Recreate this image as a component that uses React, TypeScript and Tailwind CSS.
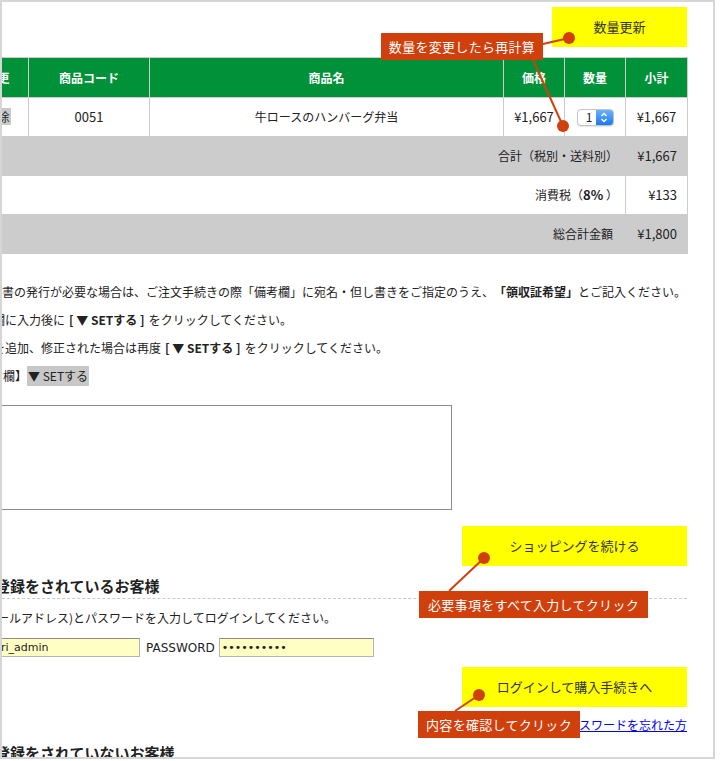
import React from "react";

const Callout: React.FC<{ className: string; children: React.ReactNode }> = ({
  className,
  children,
}) => (
  <div
    className={`absolute flex items-center justify-center bg-[#d0400c] text-[13px] tracking-[0.3px] text-white ${className}`}
  >
    {children}
  </div>
);

const YellowButton: React.FC<{ className: string; children: React.ReactNode }> = ({
  className,
  children,
}) => (
  <div className="flex justify-end">
    <div
      className={`flex h-[40px] items-center justify-center bg-[#ffff00] text-[13px] text-[#333] ${className}`}
    >
      {children}
    </div>
  </div>
);

const QtySelect = () => (
  <div className="mx-auto flex h-[17px] w-[37px] items-center overflow-hidden rounded-[4px] border border-[#c4c4c4] bg-white shadow-[0_1px_1px_rgba(0,0,0,0.1)]">
    <span className="flex-1 pl-[5px] text-[12px] leading-none">1</span>
    <span className="flex h-full w-[17px] items-center justify-center bg-linear-to-b from-[#69b1fb] to-[#1b78f0]">
      <svg width="8" height="11" viewBox="0 0 8 11" fill="none">
        <path d="M1.5 4 L4 1.5 L6.5 4" stroke="white" strokeWidth="1.4" />
        <path d="M1.5 7 L4 9.5 L6.5 7" stroke="white" strokeWidth="1.4" />
      </svg>
    </span>
  </div>
);

const SET = "[\u00a0▼ SETする ]";

export default function App() {
  return (
    <div className="h-[761px] w-[720px] bg-white font-['Noto_Sans_CJK_JP',sans-serif] text-[#222]">
      <div className="relative h-[759px] w-[715px] overflow-hidden border-2 border-[#d6d6d6] bg-white">
        <div className="pr-[26px] pt-[5px]">
          <YellowButton className="w-[135px]">数量更新</YellowButton>

          <table className="-ml-[36px] mt-[10px] w-[721px] table-fixed border-collapse text-[12px]">
            <colgroup>
              <col className="w-[62px]" />
              <col className="w-[121px]" />
              <col className="w-[354px]" />
              <col className="w-[61px]" />
              <col className="w-[61px]" />
              <col className="w-[62px]" />
            </colgroup>
            <thead>
              <tr className="h-[40px] bg-[#009139] font-bold text-white">
                <th className="border border-[#ccc]">変更</th>
                <th className="border border-[#ccc]">商品コード</th>
                <th className="border border-[#ccc]">商品名</th>
                <th className="border border-[#ccc]">価格</th>
                <th className="border border-[#ccc]">数量</th>
                <th className="border border-[#ccc]">小計</th>
              </tr>
            </thead>
            <tbody>
              <tr className="h-[39px] text-center text-[13px]">
                <td className="border border-[#ccc]">
                  <span className="bg-[#c8c8c8] px-[1px] text-[12px]">削除</span>
                </td>
                <td className="border border-[#ccc]">0051</td>
                <td className="border border-[#ccc] text-[12px]">牛ロースのハンバーグ弁当</td>
                <td className="border border-[#ccc]">¥1,667</td>
                <td className="border border-[#ccc]">
                  <QtySelect />
                </td>
                <td className="border border-[#ccc]">¥1,667</td>
              </tr>
              <tr className="h-[39px] bg-[#cccccc]">
                <td colSpan={5} className="border border-[#ccc] pr-[7px] text-right">
                  合計（税別・送料別）
                </td>
                <td className="border border-[#ccc] pr-[10px] text-right text-[13px]">¥1,667</td>
              </tr>
              <tr className="h-[39px]">
                <td colSpan={5} className="border border-[#ccc] pr-[7px] text-right">
                  消費税（<b className="text-[13px]">8%</b> ）
                </td>
                <td className="border border-[#ccc] pr-[10px] text-right text-[13px]">¥133</td>
              </tr>
              <tr className="h-[39px] bg-[#cccccc]">
                <td colSpan={5} className="border border-[#ccc] pr-[12px] text-right">
                  総合計金額
                </td>
                <td className="border border-[#ccc] pr-[10px] text-right text-[13px]">¥1,800</td>
              </tr>
            </tbody>
          </table>

          <div className="mt-[24px] whitespace-nowrap text-[12px]">
            <div className="-ml-[36px] flex h-[28px] items-center">
              ※領収書の発行が必要な場合は、ご注文手続きの際「備考欄」に宛名・但し書きをご指定のうえ、
              <b>「領収証希望」</b>とご記入ください。
            </div>
            <div className="-ml-[45px] flex h-[28px] items-center">
              ※備考欄に入力後に<b className="mx-[4px]">{SET}</b>をクリックしてください。
            </div>
            <div className="-ml-[45px] flex h-[28px] items-center">
              ※内容を追加、修正された場合は再度<b className="mx-[4px]">{SET}</b>
              をクリックしてください。
            </div>
            <div className="-ml-[35px] flex h-[28px] items-center">
              【備考欄】
              <span className="flex h-[20px] items-center bg-[#c8c8c8] px-[1px]">▼ SETする</span>
            </div>
          </div>

          <textarea
            readOnly
            className="-ml-[22px] mt-[15px] block h-[105px] w-[472px] resize-none border border-[#8c8c8c] outline-none"
          />

          <div className="mt-[16px]">
            <YellowButton className="w-[225px]">ショッピングを続ける</YellowButton>
          </div>

          <h3 className="-ml-[37px] whitespace-nowrap pt-[10px] text-[15px] font-bold leading-[20px]">
            会員登録をされているお客様
          </h3>
          <div className="mt-[2px] border-b border-dashed border-[#c8c8c8]" />

          <div className="-ml-[17px] mt-[9px] whitespace-nowrap text-[12px] leading-[20px]">
            メールアドレス)とパスワードを入力してログインしてください。
          </div>

          <div className="mt-[10px] flex h-[19px] items-center font-['DejaVu_Sans',sans-serif]">
            <input
              readOnly
              value="ri_admin"
              className="-ml-[4px] h-[19px] w-[142px] border border-[#b4b4b4] border-t-[#8c8c8c] bg-[#ffffc4] px-[2px] text-[11px] outline-none"
            />
            <span className="ml-[6px] text-[12px]">PASSWORD</span>
            <input
              readOnly
              type="password"
              value="abcdefghij"
              className="ml-[4px] h-[19px] w-[155px] border border-[#b4b4b4] border-t-[#8c8c8c] bg-[#ffffc4] px-[2px] text-[11px] outline-none"
            />
          </div>

          <div className="mt-[10px]">
            <YellowButton className="w-[225px]">ログインして購入手続きへ</YellowButton>
          </div>

          <div className="mt-[9px] text-right text-[12px] leading-[18px]">
            <a className="text-[#0000ee] underline">パスワードを忘れた方</a>
          </div>

          <h3 className="-ml-[37px] whitespace-nowrap pt-[9px] text-[15px] font-bold leading-[20px]">
            会員登録をされていないお客様
          </h3>
        </div>

        <svg
          className="pointer-events-none absolute -left-[2px] -top-[2px]"
          width="720"
          height="761"
          viewBox="0 0 720 761"
        >
          <g stroke="#d0400c" strokeWidth="2">
            <line x1="543" y1="44" x2="569" y2="38" />
            <line x1="533" y1="60" x2="563" y2="126" />
            <line x1="449" y1="591" x2="484" y2="558" />
            <line x1="455" y1="711" x2="479" y2="695" />
          </g>
          <g fill="#d0400c">
            <circle cx="569" cy="38" r="6" />
            <circle cx="563" cy="126" r="6" />
            <circle cx="484" cy="558" r="6" />
            <circle cx="479" cy="695" r="6" />
          </g>
        </svg>

        <Callout className="left-[379px] top-[31px] h-[27px] w-[162px]">数量を変更したら再計算</Callout>
        <Callout className="left-[417px] top-[589px] h-[27px] w-[229px]">
          必要事項をすべて入力してクリック
        </Callout>
        <Callout className="left-[416px] top-[709px] h-[27px] w-[162px]">内容を確認してクリック</Callout>
      </div>
    </div>
  );
}
